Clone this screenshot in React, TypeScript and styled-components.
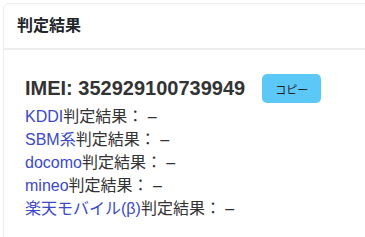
import styled, { createGlobalStyle } from "styled-components";

const GlobalStyle = createGlobalStyle`
  body {
    margin: 0;
    background: #fff;
    font-family: "Liberation Sans", "Noto Sans CJK JP", sans-serif;
    color: #333;
  }
`

const carriers = ['KDDI', 'SBM系', 'docomo', 'mineo', '楽天モバイル(β)']

const App = () => {
  return (
    <Page>
      <GlobalStyle/>
      <Card>
        <CardHeader>判定結果</CardHeader>
        <CardBody>
          <ImeiRow>
            <Imei>IMEI: 352929100739949</Imei>
            <CopyButton>コピー</CopyButton>
          </ImeiRow>
          {carriers.map((name) => (
            <ResultLine key={name}>
              <a href="#">{name}</a>判定結果： –
            </ResultLine>
          ))}
        </CardBody>
      </Card>
    </Page>
  )
}

const Page = styled.div`
  width: 365px;
  height: 237px;
  padding: 3px 0 0 3px;
  box-sizing: border-box;
  overflow: hidden;
`

const Card = styled.div`
  width: 420px;
  border: 1px solid #ececec;
  border-radius: 6px;
  background: #fff;
`

const CardHeader = styled.div`
  box-sizing: border-box;
  height: 46px;
  padding: 0 13px 4px;
  display: flex;
  align-items: center;
  font-size: 16px;
  font-weight: 700;
  color: #212529;
  background: #fff;
  border-bottom: 2px solid #ececec;
  border-radius: 6px 6px 0 0;
`

const CardBody = styled.div`
  padding: 24px 21px;
`

const ImeiRow = styled.div`
  display: flex;
  align-items: center;
  gap: 17px;
  margin-bottom: 2px;
`

const Imei = styled.div`
  font-size: 20px;
  font-weight: 700;
  color: #333;
`

const CopyButton = styled.button`
  width: 59px;
  height: 29px;
  border: none;
  border-radius: 5px;
  background: #5bc8f7;
  color: #222;
  font-family: "Noto Sans CJK JP", sans-serif;
  font-size: 11px;
  padding: 0;
`

const ResultLine = styled.div`
  font-size: 16px;
  line-height: 23px;
  color: #333;

  & > a {
    color: #3b49c9;
    text-decoration: none;
  }
`

export default App
